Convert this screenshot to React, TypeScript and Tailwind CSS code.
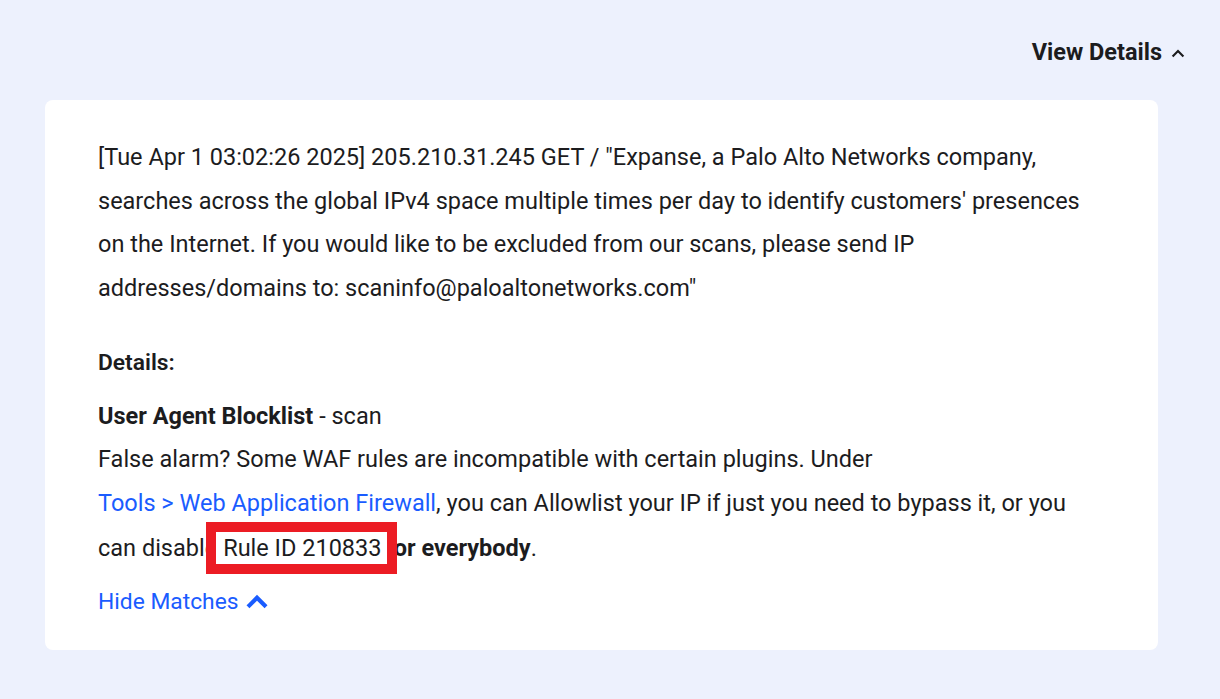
const ChevronUp = ({ className, width }: { className: string; width: number }) => (
  <svg viewBox="0 0 24 24" fill="none" stroke="currentColor" strokeWidth={width} strokeLinecap="square" strokeLinejoin="miter" className={className}>
    <path d="M5 16 L12 9 L19 16" />
  </svg>
);

export default function App() {
  return (
    <main className="w-[1220px] h-[699px] bg-[#edf1fd] text-[#1c1c1e] font-['Roboto',sans-serif] flex flex-col">
      <div className="flex justify-end items-center pr-[34px] h-[100px] box-border">
        <button className="flex items-center gap-[8px] text-[23.5px] font-bold leading-[30px] mt-[4px]">
          View Details
          <ChevronUp className="w-[16px] h-[16px] mt-[2px]" width={3.2} />
        </button>
      </div>

      <section className="mx-[45px] w-[1113px] h-[550px] bg-white rounded-[8px] pl-[53px] pr-[53px] pt-[36px] box-border text-[23.5px] leading-[43.7px]">
        <p>
          [Tue Apr 1 03:02:26 2025] 205.210.31.245 GET / "Expanse, a Palo Alto Networks company, searches across the global
          IPv4 space multiple times per day to identify customers' presences on the Internet. If you would like to be excluded
          from our scans, please send IP addresses/domains to: scaninfo@paloaltonetworks.com"
        </p>

        <p className="mt-[30px] font-semibold text-[22.8px]">Details:</p>

        <div className="mt-[10px]">
          <p>
            <span className="font-bold">User Agent Blocklist</span> - scan
          </p>
          <p>
            False alarm? Some WAF rules are incompatible with certain plugins. Under
            <br />
            <a href="#" className="text-[#1a5cff]">Tools &gt; Web Application Firewall</a>, you can Allowlist your IP if just
            you need to bypass it, or you can disable
            <span className="relative z-10 inline-block -ml-[11px] -mr-[18px] border-[10px] border-[#ec1c24] bg-white pl-[7px] pr-[6px] leading-[32px] align-middle -mt-[4px]">
              Rule ID 210833
            </span>{" "}
            <span className="font-bold">for everybody</span>.
          </p>
        </div>

        <a href="#" className="mt-[6px] flex items-center gap-[5px] text-[22.8px] text-[#1a5cff]">
          Hide Matches
          <ChevronUp className="w-[26px] h-[26px]" width={3.8} />
        </a>
      </section>
    </main>
  );
}
